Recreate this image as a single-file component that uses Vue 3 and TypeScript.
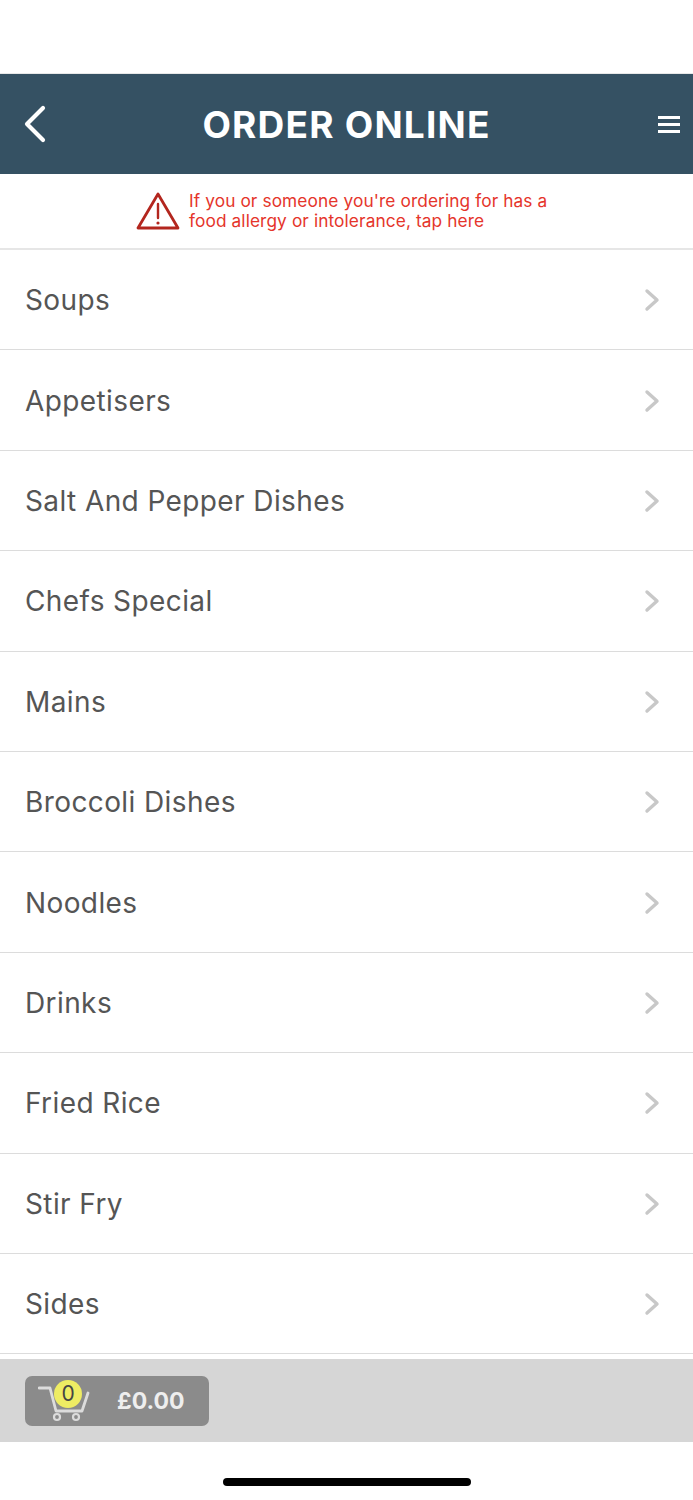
<script setup lang="ts">
const categories: string[] = [
  'Soups',
  'Appetisers',
  'Salt And Pepper Dishes',
  'Chefs Special',
  'Mains',
  'Broccoli Dishes',
  'Noodles',
  'Drinks',
  'Fried Rice',
  'Stir Fry',
  'Sides'
]
</script>

<template>
  <div class="screen">
    <div class="status"></div>

    <header class="topbar">
      <svg class="back" width="24" height="38" viewBox="0 0 24 38">
        <path d="M20 3 L4 19 L20 35" fill="none" stroke="#fff" stroke-width="4.2" stroke-linecap="round" stroke-linejoin="round" />
      </svg>
      <h1 class="title">ORDER ONLINE</h1>
      <div class="burger"><span></span><span></span><span></span></div>
    </header>

    <div class="allergy">
      <svg width="44" height="40" viewBox="0 0 44 40">
        <path d="M22 3 L42 37 H2 Z" fill="none" stroke="#b3261e" stroke-width="2.8" stroke-linejoin="round" />
        <path d="M22 13 V27" stroke="#b3261e" stroke-width="2.4" stroke-linecap="round" />
        <circle cx="22" cy="32" r="1.6" fill="#b3261e" />
      </svg>
      <p class="allergy-text">If you or someone you're ordering for has a<br />food allergy or intolerance, tap here</p>
    </div>

    <ul class="menu">
      <li v-for="name in categories" :key="name" class="row">
        <span class="row-name">{{ name }}</span>
        <svg width="16" height="24" viewBox="0 0 16 24">
          <path d="M3 3 L13 12 L3 21" fill="none" stroke="#c8c8c8" stroke-width="3.4" stroke-linecap="round" stroke-linejoin="round" />
        </svg>
      </li>
    </ul>

    <div class="cartbar">
      <div class="cart">
        <div class="cart-icon">
          <svg width="54" height="42" viewBox="0 0 54 42">
            <path d="M1 8 H12 L18 31 H44 L50 13" fill="none" stroke="#dcdcdc" stroke-width="2.8" stroke-linecap="round" stroke-linejoin="round" />
            <circle cx="19" cy="37" r="3" fill="none" stroke="#dcdcdc" stroke-width="2.2" />
            <circle cx="38" cy="37" r="3" fill="none" stroke="#dcdcdc" stroke-width="2.2" />
          </svg>
          <span class="badge">0</span>
        </div>
        <span class="total">£0.00</span>
      </div>
    </div>

    <div class="home-row"><div class="home"></div></div>
  </div>
</template>

<style scoped>
.screen {
  width: 693px;
  height: 1500px;
  background: #fff;
  overflow: hidden;
  font-family: Inter, "Liberation Sans", sans-serif;
}

.status {
  height: 74px;
  box-sizing: border-box;
  border-bottom: 1px solid #e8e8e8;
}

.topbar {
  height: 100px;
  background: #355163;
  display: flex;
  align-items: center;
  justify-content: space-between;
  padding: 0 13px 0 23px;
  position: relative;
}

.title {
  position: absolute;
  left: 0;
  right: 0;
  margin: 0;
  text-align: center;
  color: #fff;
  font-size: 37px;
  font-weight: 700;
  letter-spacing: 1.2px;
}

.burger {
  display: flex;
  flex-direction: column;
  gap: 4px;
}

.burger span {
  display: block;
  width: 22px;
  height: 3px;
  background: #fff;
}

.allergy {
  height: 74px;
  box-sizing: border-box;
  display: flex;
  align-items: center;
  padding-left: 136px;
  gap: 9px;
}

.allergy-text {
  margin: 0;
  color: #e5352b;
  font-size: 17.3px;
  line-height: 20px;
  letter-spacing: 0.1px;
}

.menu {
  list-style: none;
  margin: 0;
  padding: 0;
  border-top: 2px solid #e6e6e6;
}

.row {
  height: 100.4px;
  box-sizing: border-box;
  border-bottom: 1px solid #dcdcdc;
  display: flex;
  align-items: center;
  justify-content: space-between;
  padding: 1px 33px 0 25px;
}

.row-name {
  color: #555;
  font-size: 28px;
  letter-spacing: 0.4px;
}

.cartbar {
  margin-top: 5px;
  height: 83px;
  background: #d6d6d6;
  display: flex;
  align-items: center;
  padding-left: 25px;
}

.cart {
  width: 184px;
  height: 50px;
  background: #8b8b8b;
  border-radius: 7px;
  display: flex;
  align-items: center;
}

.cart-icon {
  position: relative;
  margin-left: 13px;
  width: 54px;
  height: 42px;
}

.badge {
  position: absolute;
  left: 16px;
  top: 0;
  width: 28px;
  height: 28px;
  border-radius: 50%;
  background: #eeec63;
  color: #444;
  font-size: 21px;
  line-height: 28px;
  text-align: center;
}

.total {
  margin-left: 25px;
  padding-top: 1px;
  color: #eee;
  font-size: 23px;
  font-weight: 700;
}

.home-row {
  display: flex;
  justify-content: center;
  padding-top: 36px;
}

.home {
  width: 248px;
  height: 8px;
  border-radius: 4px;
  background: #000;
}
</style>
